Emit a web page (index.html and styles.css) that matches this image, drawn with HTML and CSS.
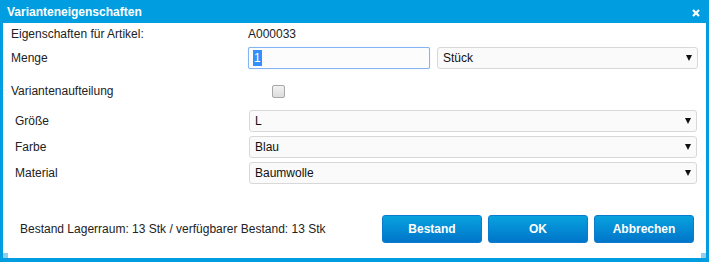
FILE: index.html
```html
<!DOCTYPE html>
<html>
<head>
    <title>Varianteneigenschaften</title>
    <link rel="stylesheet" href="styles.css">
</head>
<body>
    <div class="dialog">
        <div class="titlebar">
            <span class="title">Varianteneigenschaften</span>
            <svg class="close" width="8" height="8" viewBox="0 0 8 8">
                <path d="M1 1 L7 7 M7 1 L1 7" stroke="#fff" stroke-width="2.2"/>
            </svg>
        </div>
        <div class="content">
            <div class="row row-info">
                <span>Eigenschaften für Artikel:</span>
                <span>A000033</span>
            </div>
            <div class="row row-menge">
                <span>Menge</span>
                <div class="menge-fields">
                    <div class="input"><span class="sel">1</span></div>
                    <div class="select">Stück</div>
                </div>
            </div>
            <div class="row row-check">
                <span>Variantenaufteilung</span>
                <span class="checkbox"></span>
            </div>
            <div class="row row-attr first">
                <span class="attr-label">Größe</span>
                <div class="select">L</div>
            </div>
            <div class="row row-attr">
                <span class="attr-label">Farbe</span>
                <div class="select">Blau</div>
            </div>
            <div class="row row-attr">
                <span class="attr-label">Material</span>
                <div class="select">Baumwolle</div>
            </div>
            <div class="footer">
                <span class="stock">Bestand Lagerraum: 13 Stk / verfügbarer Bestand: 13 Stk</span>
                <div class="buttons">
                    <button>Bestand</button>
                    <button>OK</button>
                    <button>Abbrechen</button>
                </div>
            </div>
        </div>
        <span class="grip grip-left"></span>
        <span class="grip grip-right"></span>
    </div>
</body>
</html>
```
FILE: styles.css
```css
html, body {
    margin: 0;
    background-color: #fff;
}
body {
    font-family: "Liberation Sans", Arial, sans-serif;
    font-size: 12px;
    color: #222;
}
.dialog {
    position: relative;
    box-sizing: border-box;
    width: 709px;
    height: 262px;
    border: 3px solid #009ee0;
    border-top: none;
    border-bottom-width: 4px;
    display: flex;
    flex-direction: column;
}
.titlebar {
    height: 23px;
    margin: 0 -3px;
    padding: 0 9px 0 7px;
    background-color: #009ee0;
    display: flex;
    align-items: center;
    justify-content: space-between;
}
.title {
    color: #fff;
    font-weight: bold;
    font-size: 12px;
    margin-top: 1px;
}
.close {
    margin-top: 3px;
}
.content {
    flex: 1;
    padding: 1px 8px 0 8px;
    display: flex;
    flex-direction: column;
}
.row {
    display: grid;
    grid-template-columns: 237px 1fr;
    align-items: center;
}
.row-info {
    height: 20px;
}
.row-menge {
    margin-top: 3px;
    height: 22px;
}
.menge-fields {
    display: flex;
    gap: 7px;
    height: 22px;
}
.input {
    box-sizing: border-box;
    width: 182px;
    height: 22px;
    border: 1px solid #85b3f3;
    border-radius: 2px;
    box-shadow: 0 0 1px #a9c8f5;
    background-color: #fcfcfc;
    padding: 3px 0 0 4px;
    line-height: 14px;
}
.sel {
    background-color: #3390ff;
    color: #fff;
    padding: 1px 1px;
}
.select {
    position: relative;
    box-sizing: border-box;
    flex: 1;
    height: 22px;
    border: 1px solid #d8d8d8;
    border-radius: 3px;
    background-color: #fafafa;
    padding: 3px 0 0 5px;
    line-height: 14px;
    color: #111;
}
.select::after {
    content: "";
    position: absolute;
    right: 5px;
    top: 7px;
    width: 0;
    height: 0;
    border-left: 3.5px solid transparent;
    border-right: 3.5px solid transparent;
    border-top: 6px solid #111;
}
.row-check {
    margin-top: 11px;
    height: 22px;
}
.checkbox {
    box-sizing: border-box;
    width: 13px;
    height: 13px;
    margin-left: 24px;
    border: 1px solid #a8a8a8;
    border-radius: 2px;
    background: linear-gradient(#f2f2f2, #dcdcdc);
}
.row-attr {
    margin-top: 4px;
    height: 22px;
    grid-template-columns: 238px 1fr;
}
.row-attr.first {
    margin-top: 8px;
}
.row-attr .select {
    margin-right: 1px;
}
.attr-label {
    padding-left: 4px;
}
.footer {
    margin-top: 31px;
    display: flex;
    align-items: center;
    justify-content: space-between;
    height: 28px;
}
.stock {
    padding-left: 9px;
}
.buttons {
    display: flex;
    gap: 6px;
    margin-right: 4px;
}
button {
    box-sizing: border-box;
    width: 100px;
    height: 28px;
    border: 1px solid #0b7ccb;
    border-radius: 3px;
    background: linear-gradient(#08a2de, #0075ca);
    color: #fff;
    font-family: "Liberation Sans", Arial, sans-serif;
    font-size: 12px;
    font-weight: bold;
    padding: 0;
}
.grip {
    position: absolute;
    bottom: 0;
    width: 5px;
    height: 5px;
    background-color: #8fd0f0;
}
.grip-left {
    left: 0;
}
.grip-right {
    right: 0;
}
```
